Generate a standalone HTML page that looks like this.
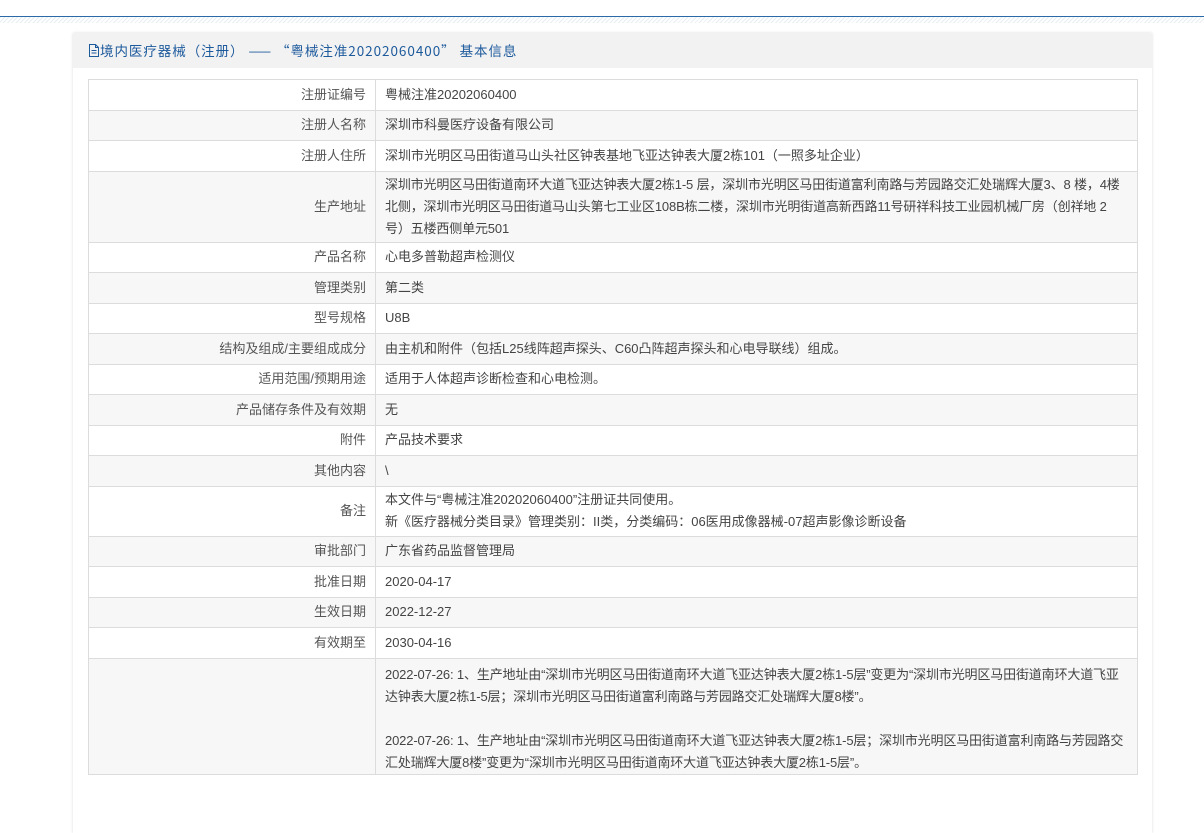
<!DOCTYPE html>
<html><head><meta charset="utf-8"><style>
body{margin:0;background:#fff;font-family:"Liberation Sans","Noto Sans CJK SC",sans-serif;font-size:13px;color:#444;width:1204px;height:756px;overflow:hidden;position:relative}
.top{position:absolute;left:0;top:16px;width:1204px;height:1px;background:#2a6aa8}
.hatch{position:absolute;left:0;top:17px;width:1204px;height:6px;background:repeating-linear-gradient(135deg,#e6edf3 0 1px,#fff 1px 3px)}
.panel{position:absolute;left:73px;top:33px;width:1079px;height:800px;background:#fff;box-shadow:0 0 3px #ddd}
.hd{height:35px;background:#f2f2f2;color:#1d5a9c;font-size:13.5px;line-height:35px;padding-left:15px;font-family:"Noto Sans CJK SC",sans-serif;letter-spacing:0.95px}
table{position:absolute;left:15px;top:46px;width:1050px;border-collapse:collapse}
td{border:1px solid #dcdcdc;padding:0 9px;line-height:22px;height:29.5px;vertical-align:middle}
td.l{width:268px;text-align:right;color:#555}
tr:nth-child(even) td{background:#f7f7f7}
.n{letter-spacing:-0.15px}
</style></head><body>
<div class="top"></div><div class="hatch"></div>
<div class="panel">
<div class="hd"><svg width="12" height="13" viewBox="0 0 12 13" style="vertical-align:-1px"><path d="M1.5 .5h6l3 3v9h-9z M7.5 .5v3h3 M3.5 6.5h5 M3.5 9h5" fill="none" stroke="#1d5a9c"/></svg>境内医疗器械（注册） —— “粤械注准20202060400” 基本信息</div>
<table>
<tr><td class="l">注册证编号</td><td>粤械注准20202060400</td></tr>
<tr><td class="l">注册人名称</td><td>深圳市科曼医疗设备有限公司</td></tr>
<tr><td class="l">注册人住所</td><td>深圳市光明区马田街道马山头社区钟表基地飞亚达钟表大厦2栋101（一照多址企业）</td></tr>
<tr><td class="l" style="height:70px">生产地址</td><td class="n">深圳市光明区马田街道南环大道飞亚达钟表大厦2栋1-5 层，深圳市光明区马田街道富利南路与芳园路交汇处瑞辉大厦3、8 楼，4楼北侧，深圳市光明区马田街道马山头第七工业区108B栋二楼，深圳市光明街道高新西路11号研祥科技工业园机械厂房（创祥地 2 号）五楼西侧单元501</td></tr>
<tr><td class="l">产品名称</td><td>心电多普勒超声检测仪</td></tr>
<tr><td class="l">管理类别</td><td>第二类</td></tr>
<tr><td class="l">型号规格</td><td>U8B</td></tr>
<tr><td class="l">结构及组成/主要组成成分</td><td>由主机和附件（包括L25线阵超声探头、C60凸阵超声探头和心电导联线）组成。</td></tr>
<tr><td class="l">适用范围/预期用途</td><td>适用于人体超声诊断检查和心电检测。</td></tr>
<tr><td class="l">产品储存条件及有效期</td><td>无</td></tr>
<tr><td class="l">附件</td><td>产品技术要求</td></tr>
<tr><td class="l">其他内容</td><td>\</td></tr>
<tr><td class="l" style="height:49px">备注</td><td>本文件与“粤械注准20202060400”注册证共同使用。<br>新《医疗器械分类目录》管理类别：II类，分类编码：06医用成像器械-07超声影像诊断设备</td></tr>
<tr><td class="l">审批部门</td><td>广东省药品监督管理局</td></tr>
<tr><td class="l">批准日期</td><td>2020-04-17</td></tr>
<tr><td class="l">生效日期</td><td>2022-12-27</td></tr>
<tr><td class="l">有效期至</td><td>2030-04-16</td></tr>
<tr><td class="l"></td><td class="n" style="vertical-align:top;padding-top:5px">2022-07-26: 1、生产地址由“深圳市光明区马田街道南环大道飞亚达钟表大厦2栋1-5层”变更为“深圳市光明区马田街道南环大道飞亚达钟表大厦2栋1-5层；深圳市光明区马田街道富利南路与芳园路交汇处瑞辉大厦8楼”。<br><br>2022-07-26: 1、生产地址由“深圳市光明区马田街道南环大道飞亚达钟表大厦2栋1-5层；深圳市光明区马田街道富利南路与芳园路交汇处瑞辉大厦8楼”变更为“深圳市光明区马田街道南环大道飞亚达钟表大厦2栋1-5层”。</td></tr>
</table>
</div>
</body></html>
